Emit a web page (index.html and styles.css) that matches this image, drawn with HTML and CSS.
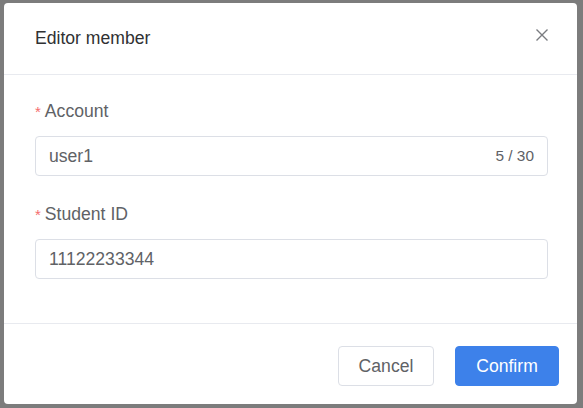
FILE: index.html
```html
<!DOCTYPE html>
<html>
<head>
<meta charset="utf-8">
<link rel="stylesheet" href="styles.css">
</head>
<body>
<div class="dialog">
  <div class="header">
    <span class="title">Editor member</span>
    <button class="close" aria-label="close">
      <svg width="14" height="14" viewBox="0 0 14 14"><path d="M1.5 1.5 L12.5 12.5 M12.5 1.5 L1.5 12.5" stroke="#7a7c80" stroke-width="1.4" fill="none"/></svg>
    </button>
  </div>
  <div class="body">
    <div class="field">
      <label class="label"><span class="req">*</span>Account</label>
      <div class="input">
        <span class="value">user1</span>
        <span class="count">5 / 30</span>
      </div>
    </div>
    <div class="field">
      <label class="label"><span class="req">*</span>Student ID</label>
      <div class="input">
        <span class="value">11122233344</span>
      </div>
    </div>
  </div>
  <div class="footer">
    <button class="btn btn-cancel">Cancel</button>
    <button class="btn btn-primary">Confirm</button>
  </div>
</div>
</body>
</html>
```

FILE: styles.css
```css
html, body {
  margin: 0;
  height: 100%;
}
body {
  background: #7c7c7c;
  padding: 3px 6px 4px 4px;
  box-sizing: border-box;
  font-family: "Liberation Sans", Arial, sans-serif;
}
.dialog {
  background: #fff;
  border-radius: 4px;
  height: 401px;
  display: flex;
  flex-direction: column;
}
.header {
  height: 71px;
  border-bottom: 1px solid #e8eaef;
  display: flex;
  align-items: center;
  justify-content: space-between;
  padding: 0 28px 0 31px;
}
.title {
  font-size: 17.6px;
  color: #303133;
}
.close {
  border: 0;
  background: none;
  padding: 0;
  width: 14px;
  height: 14px;
  margin-top: -8px;
  display: flex;
}
.body {
  padding: 24px 29px 0 31px;
  height: 249px;
  box-sizing: border-box;
  border-bottom: 1px solid #e8eaef;
}
.field + .field {
  margin-top: 26px;
}
.label {
  display: flex;
  align-items: center;
  height: 24px;
  font-size: 17.6px;
  color: #606266;
  margin-bottom: 13px;
}
.req {
  color: #f56c6c;
  margin-right: 4px;
  font-size: 15px;
  line-height: 1;
}
.input {
  height: 40px;
  box-sizing: border-box;
  border: 1px solid #dcdfe6;
  border-radius: 4px;
  display: flex;
  align-items: center;
  justify-content: space-between;
  padding: 0 13px 0 13px;
}
.value {
  font-size: 17.6px;
  color: #606266;
}
.count {
  font-size: 15.4px;
  color: #606266;
}
.footer {
  flex: 1;
  display: flex;
  justify-content: flex-end;
  align-items: flex-start;
  padding: 22px 18px 0 0;
  gap: 21px;
}
.btn {
  height: 40px;
  border-radius: 4px;
  font-family: "Liberation Sans", Arial, sans-serif;
  font-size: 17.6px;
  cursor: pointer;
}
.btn-cancel {
  width: 96px;
  background: #fff;
  border: 1px solid #dcdfe6;
  color: #606266;
}
.btn-primary {
  width: 104px;
  background: #3d81ea;
  border: 1px solid #3d81ea;
  color: #fff;
}
```
